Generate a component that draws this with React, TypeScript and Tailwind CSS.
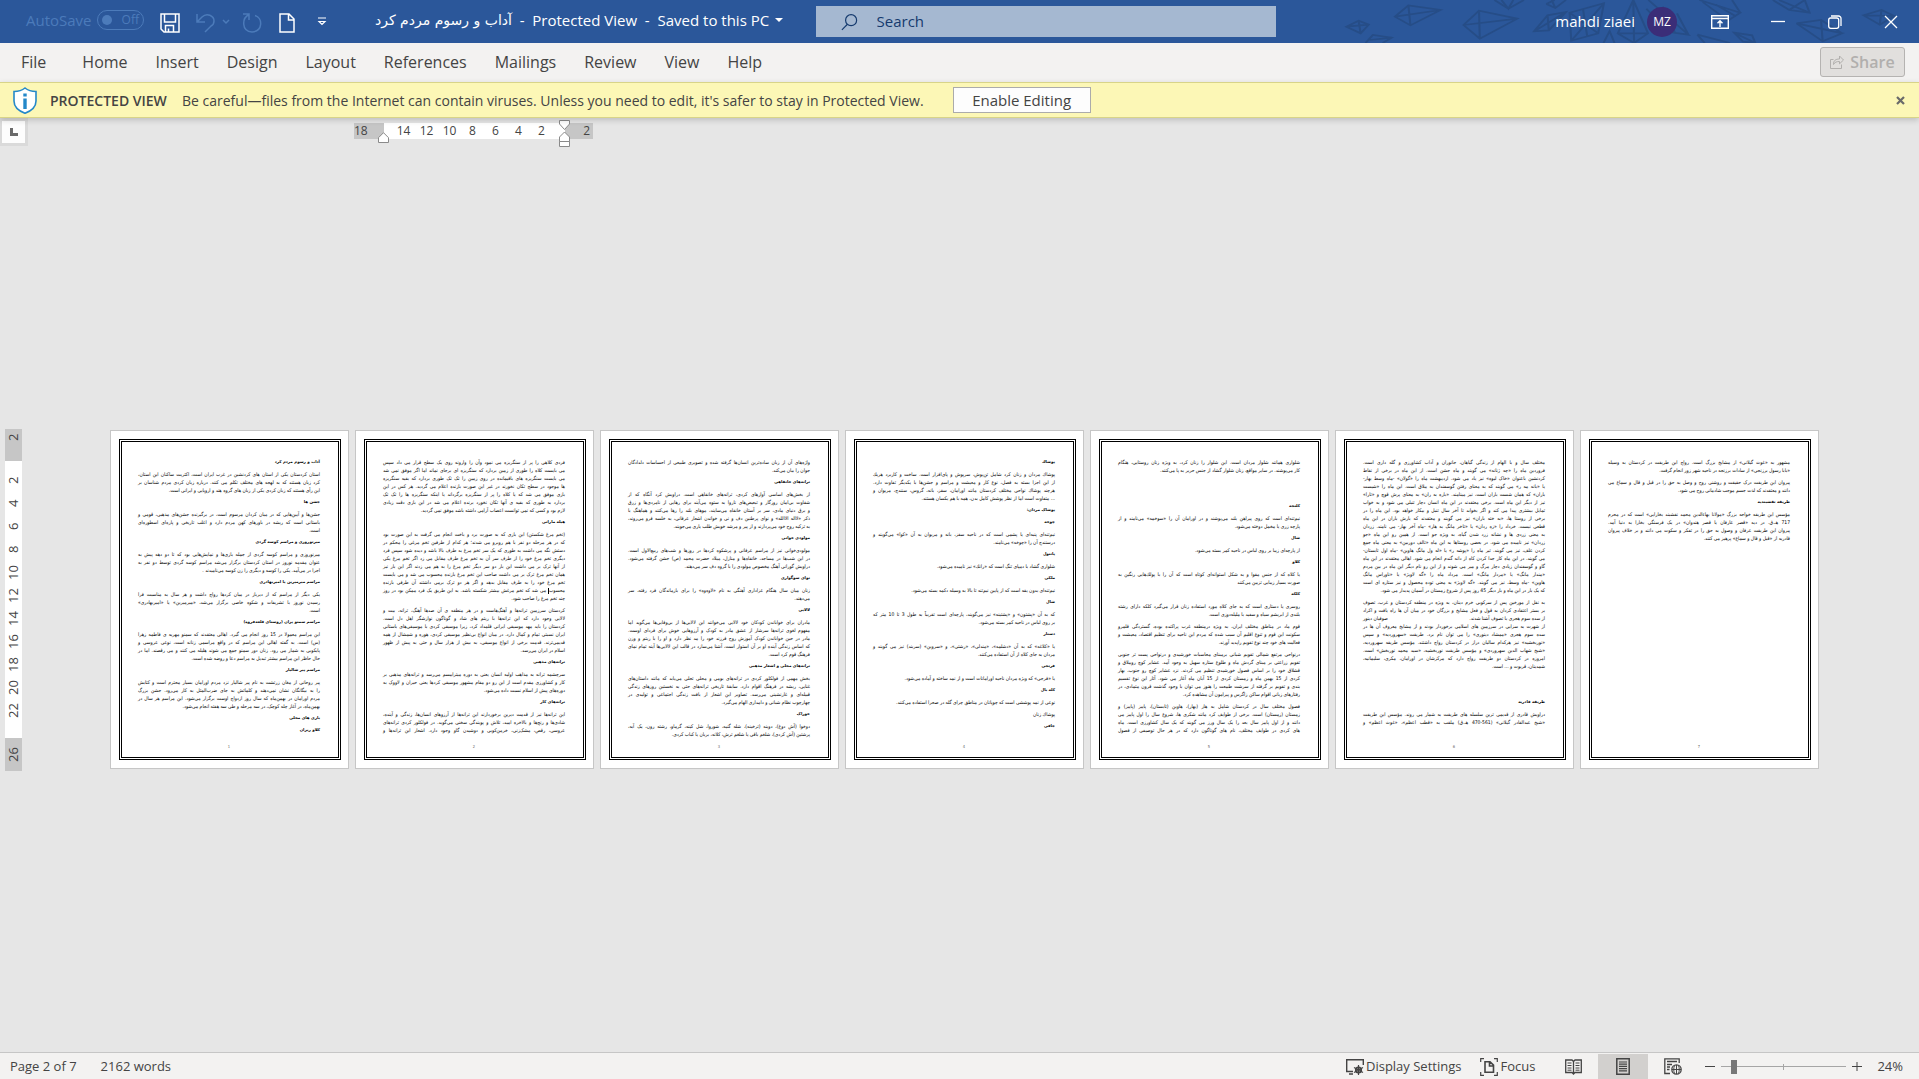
import type { ReactNode } from "react";

/* A string is a bold heading, an array is a paragraph split into its lines */
type Block = string | string[];

const tabs = [
  "File",
  "Home",
  "Insert",
  "Design",
  "Layout",
  "References",
  "Mailings",
  "Review",
  "View",
  "Help",
];

const pages: Block[][] = [
  [
    "آداب و رسوم مردم کرد",
    [
      "استان کردستان یکی از استان های کردنشین در غرب ایران است، اکثریت ساکنان این استان،",
      "کرد زبان هستند که به لهجه های مختلف تکلم می کنند. درباره زبان کردی مردم شناسان بر",
      "این رأی هستند که زبان کردی یکی از زبان های گروه هند و اروپایی و ایرانی است.",
    ],
    "جشن ها",
    [
      "جشن‌ها و آیین‌هایی که در میان کردان مرسوم است، در برگیرنده جشن‌های مذهبی، قومی و",
      "باستانی است که ریشه در باورهای کهن مردم دارد و اغلب تاریخی و پاره‌ای اسطوره‌ای",
      "است.",
    ],
    "میرنوروزی و مراسم کوسه گردی",
    [
      "میرنوروزی و مراسم کوسه گردی از جمله بازی‌ها و نمایش‌هایی بود که تا دو دهه پیش به",
      "عنوان مقدمه نوروز در استان کردستان برگزار می‌شد مراسم کوسه گردی توسط دو نفر به",
      "اجرا در می‌آمد. یکی را کوسه و دیگری را زن کوسه می‌نامیدند .",
    ],
    "مراسم میرمیرین یا امیربهادری",
    [
      "یکی دیگر از مراسم که از دیرباز در میان کردها رواج داشت و هر سال به مناسبت فرا",
      "رسیدن نوروز با تشریفات و شکوه خاصی برگزار می‌شد، «میرمیرین» یا «امیربهادری»",
      "است.",
    ],
    "مراسم سمنو پزان (روستای قلعه‌فروه)",
    [
      "این مراسم معمولا در 15 روز انجام می گیرد. اهالی معتقدند که سمنو مهریه ی فاطمه زهرا",
      "(س) است. به گفته اهالی این مراسم که در واقع مراسمی زنانه است، نوعی عروسی و",
      "پایکوبی به شمار می رود. زنان دور سمنو جمع می شوند هلیله می کنند و می رقصند. اما در",
      "حال حاظر این مراسم بیشتر تبدیل به مراسم دعا و روضه شده است.",
    ],
    "مراسم پیر شالیار",
    [
      "پیر روحانی از مغان زرتشت به نام پیر شالیار نزد مردم اورامان بسیار محترم است و کتابش",
      "را به بیگانگان نشان نمی‌دهند و کلماتش به جای ضرب‌المثل به کار می‌رود. جشن بزرگ",
      "مردم اورامان در بهمن‌ماه که سال روز ازدواج اوست برگزار می‌شود. این مراسم هر سال در",
      "بهمن‌ماه، در آغاز چله کوچک، در سه مرحله و طی سه هفته انجام می‌شود.",
    ],
    "بازی های محلی",
    "کلاو ریزان",
  ],
  [
    [
      "فردی کلاهی را پر از سنگریزه می نمود وآن را وارونه روی یک سطح قرار می داد سپس",
      "می بایست کلاه را طوری از زمین بردارد که سنگریزه ای برجای نماند اما اگر موفق نمی شد",
      "می بایست سنگریزه های باقیمانده در روی زمین را تک تک طوری بردارد که بقیه سنگریزه",
      "ها موجود در سطح تکان نخورند در غیر این صورت بازنده اعلام می گردید. هر کس در این",
      "بازی موفق می شد که یا کلاه را پر از سنگریزه برگرداند یا اینکه سنگریزه ها را تک تک",
      "بردارد به طوری که بقیه ی آنها تکان نخورد برنده اعلام می شد در این بازی دقت زیادی",
      "لازم بود و کسی که نمی توانست اعصاب آرامی داشته باشد موفق نمی گردید.",
    ],
    "هیله مارانی",
    [
      "(تخم مرغ شکستن) این بازی که به صورت برد و باخت انجام می گرفت به این صورت بود",
      "که در هر مرحله دو نفر با هم روبرو می شدند؛ هر کدام از طرفین تخم مرغی را محکم در",
      "دستش نگه می داشت به طوری که یک سر تخم مرغ به طرف بالا باشد و دیده شود سپس فرد",
      "دیگری تخم مرغ خود را از طرف سر آن به تخم مرغ طرف مقابل می زد اگر تخم مرغ یکی",
      "از آنها ترک بر می داشت این بار دو سر دیگر تخم مرغ را به هم می زدند اگر این بار نیز",
      "همان تخم مرغ ترک بر می داشت صاحب این تخم مرغ بازنده محسوب می شد و می بایست",
      "تخم مرغ خود را به طرف مقابل بدهد و اگر هر دو ترک برمی داشتند آن طرفی بازنده",
      "محسوب| می شد که تخم مرغش بیشتر شکسته باشد. به این طریق یک فرد ممکن بود در روز",
      "چند تخم مرغ را صاحب شود.",
    ],
    [
      "کردستان سرزمین ترانه‌ها و آهنگ‌هاست و در هر منطقه ی آن صدها آهنگ، ترانه، بیت و",
      "لالایی وجود دارد که این ترانه‌ها با ریتم های شاد و گوناگون نوازشگر اهل دل است.",
      "کردستان را باید مهد موسیقی ایرانی قلمداد کرد، زیرا موسیقی کردی با موسیقی‌های باستانی",
      "ایران نسبتی تمام و کمال دارد. در میان انواع بی‌نظیر موسیقی کردی، هوره و شمشال از همه",
      "قدیمی‌ترند. قدمت برخی از انواع موسیقی، به بیش از هزار سال و حتی به پیش از ظهور",
      "اسلام در ایران می‌رسد.",
    ],
    "ترانه‌های مذهبی",
    [
      "سرچشمه ترانه به مذاهب اولیه انسان یعنی به دوره میتراییسم می‌رسد و ترانه‌های مذهبی بر",
      "کار و کشاورزی مقدم است از این رو دو مقام مشهور موسیقی کردها یعنی حیران و لاووک به",
      "دوره‌های پیش از اسلام نسبت داده می‌شود.",
    ],
    "ترانه‌های کار",
    [
      "این ترانه‌ها نیز از قدمت دیرین برخوردارند این ترانه‌ها از آرزوهای انسان‌ها، زندگی و آینده،",
      "شادی‌ها و رنج‌ها و بالاخره امید، تلاش و پویندگی سخنی می‌گوید. در فولکلور کردی ترانه‌های",
      "عروسی، رقص، مشک‌زنی، خرمن‌کوبی و دوشیدن گاو وجود دارد. اشعار این ترانه‌ها و ",
    ],
  ],
  [
    [
      "واژه‌های آن از زبان ساده‌ترین انسان‌ها گرفته شده و تصویری طبیعی از احساسات دلدادگان",
      "جوان را بیان می‌کند.",
    ],
    "ترانه‌های خانقاهی",
    [
      "از بخش‌های اساسی آوازهای کردی، ترانه‌های خانقاهی است. دراویش کرد آنگاه که از",
      "شقاوت بی‌امان روزگار و تبعیض‌های ناروا به ستوه می‌آیند برای رهایی از نامردی‌ها و زرق",
      "و برق دنیای مادی، سر بر آستان خانقاه می‌سایند، موهای بلند را رها می‌کنند و هماهنگ با",
      "ذکر «لااله الاالله» و نوای پرطنین دف و نی و خواندن اشعار عرفانی، به خلسه فرو می‌روند،",
      "به تزکیه روح خود می‌پردازند و از پیر و مرشد خویش طلب یاری می‌جویند.",
    ],
    "مولودی خوانی",
    [
      "مولودی‌خوانی نیز از مراسم عرفانی و پرشکوه کردها در روزها و شب‌های ربیع‌الاول است.",
      "در این شب‌ها در مساجد، خانقاه‌ها و منازل، میلاد حضرت محمد (ص) جشن گرفته می‌شود.",
      "دراویش گورانی آهنگ مخصوص مولودی را با گروه دف سر می‌دهند.",
    ],
    "نوای سوگواری",
    [
      "زنان میان سال هنگام عزاداری آهنگی به نام «لاوه‌وه» را برای بازماندگان فرد رفته، سر",
      "می‌دهند.",
    ],
    "لالایی",
    [
      "مادران برای خواباندن کودکان خود لالایی می‌خوانند این لالایی‌ها از بی‌وفایی‌ها می‌گوید اما",
      "مفهوم لغوی ترانه‌ها سرشار از عشق مادر به کودک و آرزوهایی خوش برای فردای اوست.",
      "مادر در حین خواباندن کودک آموزش روح فرزند خود را مد نظر دارد و او را با ریتم و وزن",
      "که اساس زندگی آینده او بر آن استوار است، آشنا می‌سازد در قالب این لالایی‌ها آینه تمام نمای",
      "فرهنگ قوم کرد است.",
    ],
    "ترانه‌های محلی و اشعار مذهبی",
    [
      "بخش مهمی از فولکلور کردی در ترانه‌های بومی و محلی تجلی می‌یابد که مانند داستان‌های",
      "غنایی، ریشه در فرهنگ اقوام دارد. سابقۀ تاریخی ترانه‌های حتی به نخستین روزهای زندگی",
      "قبیله‌ای و غارنشینی می‌رسد. تصاویر این اشعار از بافت زندگی اجتماعی و تولیدی در",
      "چهارچوب نظام شبانی و دامداری الهام می‌گیرد.",
    ],
    "خوراک",
    [
      "دوخوا (آش دوغ)، دوینه (ترخینه)، شله گنیه، شوروا، شل کینه، گرماو، رشته رون، یک آبه،",
      "پرشتین (آش کردی)، شلغم باقی یا شلغم ترش، کلانه، بریان یا کباب کردی.",
    ],
  ],
  [
    "پوشاك",
    [
      " پوشاك مردان و زنان کرد شامل تن‌پوش، سرپوش و پای‌افزار است. ساخت و کاربرد هریك",
      "از این اجزا بسته به فصل، نوع کار و معیشت و مراسم و جشن‌ها با یکدیگر تفاوت دارد.",
      "هرچند پوشاك نواحی مختلف کردستان مانند اورامان، سقز، بانه، گروس، سنندج، مریوان و",
      "... متفاوت است اما از نظر پوشش کامل بدن، همه با هم یکسان هستند.",
    ],
    "پوشاک مردان:",
    "چوخه",
    [
      "نیم‌تنه‌ای پنبه‌ای یا پشمی است که در ناحیه سقز، بانه و مریوان به آن «کوا» می‌گویند و",
      "درسنندج آن را «چوخه» می‌نامند.",
    ],
    "پانتول",
    ["شلواری گشاد با دمپای تنگ است که «رانك» نیز نامیده می‌شود."],
    "ملکی",
    ["نیم‌تنه‌ای بدون یقه است که از پایین نیم‌تنه تا بالا به وسیله دکمه بسته می‌شود."],
    "شال",
    [
      "که به آن «پشتون» و «پشتینه» نیز می‌گویند، پارچه‌ای است تقریباً به طول 3 تا 10 متر که",
      "بر روی لباس در ناحیه کمر بسته می‌شود.",
    ],
    "دستار",
    [
      "یا «کلاغه» که به آن «دشلمه»، «مندلی»، «رشتی»، و «سروین» (سربند) نیز می گویند و",
      "مردان به جای کلاه از آن استفاده می‌کنند.",
    ],
    "فرنجی",
    ["یا «فرجی» که ویژه مردان ناحیه اورامانات است و از نمد ساخته و آماده می‌شود."],
    "کله بال",
    ["نوعی از نمد پوششی است که چوپانان در مناطق چرای گله در صحرا استفاده می‌کنند."],
    ["پوشاك زنان"],
    "جافی",
  ],
  [
    [
      "شلواری همانند شلوار مردان است. این شلوار را زنان کرد، به ویژه زنان روستایی، هنگام",
      "کار می‌پوشند. در سایر مواقع، زنان شلوار گشاد از جنس حریر به پا می‌کنند.",
    ],
    "",
    "",
    "کلنجه",
    [
      "نیم‌تنه‌ای است که روی پیراهن بلند می‌پوشند و در اورامان آن را «سوخمه» می‌نامند و از",
      "پارچه زری یا مخمل دوخته می‌شود.",
    ],
    "شال",
    ["از پارچه‌ای زیبا بر روی لباس در ناحیه کمر بسته می‌شود."],
    "کلاو",
    [
      "یا کلاه که از جنس مقوا و به شکل استوانه‌ای کوتاه است که آن را با پولك‌هایی رنگین به",
      "صورت بسیار زیبایی تزیین می‌کنند",
    ],
    "کلکه",
    [
      "روسری یا دستاری است که به جای کلاه مورد استفاده زنان قرار می‌گیرد کلکه دارای رشته",
      "بلندی از ابریشم سیاه و سفید با ملیله‌دوزی است.",
    ],
    [
      "قوم ماد در مناطق مختلف ایران، به ویژه درمنطقه غرب پراکنده بوده، گستردگی قلمرو",
      "سکونت این قوم و تنوع اقلیم آن سبب شده که مردم این ناحیه برای تنظیم اقتصاد، معیشت و",
      "فعالیت های خود چند نوع تقویم راپدید آورند.",
    ],
    [
      "درنواحی مرتفع شمالی تقویم شبانی برمبنای محاسبات خورشیدی و درنواحی پست تر جنوبی",
      "تقویم زراعتی بر مبنای گردش ماه و طلوع ستاره سهیل به وجود آمد. عشایر کوچ روییلاق و",
      "قشلاق خود را بر اساس فصول خورشیدی تنظیم می کردند. نزد عشایر کوچ رو جنوب، بهار",
      "کردی از 15 بهمن ماه و زمستان کردی از 15 آبان ماه آغاز می شود. آثار این نوع تقسیم",
      "بندی و تقویم بر گرفته از سرشت طبیعت را هنوز می توان با وجود گذشت قرون متمادی، در",
      "رفتارهای زبانی اقوام ساکن زاگرس و پیرامون آن مشاهده کرد.",
    ],
    [
      "فصول مختلف سال در کردستان شامل به هار (بهار)، هاوین (تابستان)، پاییز (پاییز) و",
      "زمستان (زمستان) است. برخی از طوایف کرد مانند شکری ها، شروع سال را اول پاییز می",
      "دانند و از اول پاییز سال بعد را یک سال ورز می گویند که یک سال کشاورزی است. ماه",
      "های کردی در طوایف مختلف، نام های گوناگون دارد که در هر حال توصیفی از فصول ",
    ],
  ],
  [
    [
      "مختلف سال و با الهام از زندگی گیاهان، جانوران و آداب کشاورزی و گله داری است.",
      "فروردین ماه را «چه ژنانه» می گویند و ماه جشن است. از این ماه در برخی از نقاط",
      "کردنشین باعنوان «خاک لیوه» نیز یاد می شود. اردیبهشت ماه را «گولان» -ماه وسط بهار-",
      "یا «بانه مه ر» می گویند که به معنای رفتن گوسفندان به ییلاق است. این ماه را «شیست",
      "باران» که همان شست باران است، نیز مینامند. «باره به ران» به معنای پرش قوچ و «تارا»",
      "نیز از دیگر این ماه است. برخی معتقدند در این ماه انسان دچار تنبلی می شود و به خواب",
      "تمایل بیشتری پیدا می کند و اگر بخوابد تا آخر سال تنبل و بیکار خواهد بود. این ماه را در",
      "برخی از روستا ها، «به خته باران» نیز می گویند و معتقدند که بارش باران در این ماه",
      "قطعی نیست. خرداد را «زه ردان» یا «تاخر مانگ به هار» -ماه آخر بهار- می نامند. زردان",
      "به معنی زردی ها و نشانه زرد شدن گیاه، به ویژه جو است. از همین رو این ماه «جو",
      "زردان» نیز نامیده می شود. در بعضی روستاها به این ماه «تالف دوربین» به معنی ماه جمع",
      "کردن علف، نیز می گویند. تیر ماه را «پوشه ر» یا «له ول مانگ هاوین» -ماه اول تابستان-",
      "می گویند. در این ماه کار جدا کردن کاه از دانه گندم انجام می شود. اهالی معتقدند در این ماه",
      "گاو و گوسفندان زیادی دچار مرگ و میر می شوند و از این رو نام دیگر این ماه در بین مردم",
      "«مندار مانگ» یا «مردار مانگ» است. مرداد ماه را «گه لاویژ» یا «ناوراس مانگ",
      "هاوین» -ماه وسط، نیز می گویند. «گه لاویژ» به معنی توده محصول و نیز ستاره ای است",
      "که یک بار در این ماه و بار دیگر 45 روز پس از شروع زمستان در آسمان پدیدار می شود.",
    ],
    [
      "به نقل از مورخین پس از سرکوبی خرم دینان، به ویژه در منطقه کردستان و غرب، تصوف",
      "بر بستر اعتقادی کردان به قول و فعل مشایخ و بزرگان خود در میان آن ها راه یافت و اکراد",
      "از سده سوم هجری با تصوف آشنا شدند.\tصوفیان دینور",
      "از شهرت به سزایی در سرزمین های اسلامی برخوردار بودند و از مشایخ معروف آن ها در",
      "سده سوم هجری «ممشاد دینوری» را می توان نام برد. طریقت «سهروردیه» و سپس",
      "«نوربخشیه» نیز هرکدام سالیان دراز در کردستان رواج داشتند. مؤسس طریقه سهروردیه،",
      "«شیخ شهاب الدین سهروردی» و مؤسس طریقت نوربخشیه، «سید محمد نوربخش» است.",
      "امروزه در کردستان دو طریقت رواج دارد که مرکزشان در اورامان، مکری، سلیمانیه،",
      "شمدینان، قریوت و ... است.",
    ],
    "",
    "",
    "طریقه قادریه",
    [
      "دراویش قادری از قدیمی ترین سلسله های طریقت به شمار می روند. مؤسس این طریقت",
      "«شیخ عبدالقادر گیلانی» (561-470 هـ.ق) ملقب به «قطب اعظم»، «غوث اعظم» و ",
    ],
  ],
  [
    [
      "مشهور به «غوث گیلانی» از مشایخ بزرگ است. رواج این طریقت در کردستان به وسیله",
      "«بابا رسول برزنجی» از سادات برزنجه در ناحیه شهر زور انجام گرفت.",
    ],
    [
      "پیروان این طریقت درک حقیقت و روشنی روح و وصل به حق را در قیل و قال و سماع می",
      "دانند و معتقدند که لذت جسم موجب شادمانی روح می شود.",
    ],
    "طریقه نقشبندیه",
    [
      "مؤسس این طریقه خواجه بزرگ «مولانا بهاءالدین محمد نقشبند بخارایی» است که در محرم",
      "717 هـ.ق. در دیه «قصر عارفان یا قصر هندوان» در یک فرسنگی بخارا به دنیا آمد.",
      "پیروان این طریقت عرفان و وصول به حق را در تفکر و سکوت می دانند و بر خلاف پیروان",
      "قادریه از «قیل و قال و سماع» پرهیز می کنند.",
    ],
  ],
];

function Icon({ className, box, children }: { className: string; box: string; children: ReactNode }) {
  return (
    <svg className={className} viewBox={box} fill="none" stroke="currentColor" aria-hidden="true">
      {children}
    </svg>
  );
}

/* Kite pattern printed on the right end of the title bar */
function Kites() {
  return (
    <svg
      className="absolute right-0 top-0 h-full w-[640px]"
      viewBox="0 0 1568 129"
      preserveAspectRatio="none"
      fill="none"
      stroke="#264d87"
      strokeWidth="5"
      aria-hidden="true"
    >
      <path d="M165 80l30-18 25 12-20 26zM165 80l55-6M195 62l5 38" />
      <path d="M284 50l33-34 79 14-74 46zM284 50l112-20M317 16l5 60" />
      <path d="M452 75l38-43 94 24-92 60zM452 75l132-19M490 32l2 84" />
      <path d="M212 129l18-24 46 8-22 16M222 120l54-7" />
      <path d="M528 0l34 26 38-26M545 0l17 26 12-26" />
      <path d="M655 12l22 12 26-24M668 0l9 24M655 12l20-12" />
      <path d="M625 94l33-48 45-10-42 55zM625 94l78-58M658 46l3 45" />
      <path d="M712 38l84-28-14 90-66 22zM712 38l70 62M796 10l-80 112M745 28l10 80" />
      <path d="M868 0l-38 100 40 29 34-29zM868 0l2 129M830 100l74 0M795 129l15-36 12 36" />
      <path d="M905 0l98 104-48-8-55-70M940 20l30 78M975 40l28 64" />
      <path d="M1030 0l100 38-30 24-62-56M1070 14l48 34M1130 38l-20-38" />
      <path d="M1025 104l80 25M1025 104l18 25M1115 98l44 8 8 23-30-4zM1115 98l52 31" />
      <path d="M1210 0l40 30 50 8-12-38M1250 30l38-30M1225 0l75 38" />
      <path d="M1268 70l112 30-48 24zM1268 70l60-10 52 40M1328 60l4 64" />
      <path d="M1432 46l44-16 32 18-36 26zM1432 46l76 2M1476 30l-4 44" />
    </svg>
  );
}

function TitleBar() {
  return (
    <header className="relative flex h-[43px] shrink-0 items-center bg-[#2b579a] text-white">
      <Kites />
      <div className="relative flex w-[375px] shrink-0 items-center pl-[26px] text-[#4c7bba]">
        <label htmlFor="autosave" className="w-[71px] pb-[3px] text-[15px] leading-5">
          AutoSave
        </label>
        <button
          id="autosave"
          role="switch"
          aria-checked="false"
          className="mb-[3px] flex h-5 w-[47px] items-center justify-between rounded-full border border-current px-1 text-[12px]"
        >
          <span className="size-[10px] rounded-full bg-current" />
          Off
        </button>
        <button aria-label="Save" className="ml-4 mt-[3px] text-white">
          <Icon className="size-5" box="0 0 20 20">
            <path d="M1 1h18v18H4l-3-3zM4.500 1v8h11V1M5.500 19v-6.500h8V19M8.500 19v-3.500" strokeWidth="1.500" />
          </Icon>
        </button>
        <button aria-label="Undo" className="ml-4 mt-[3px]">
          <Icon className="size-5" box="0 0 20 20">
            <path d="M1 1v8h8M1 9l5-5c5-5 12-1 12 4 0 2-1 4-3 5l-6 6" strokeWidth="1.500" />
          </Icon>
        </button>
        <button aria-label="Undo history" className="ml-[6px]">
          <Icon className="h-2 w-2" box="0 0 8 8">
            <path d="M1 2l3 3 3-3" strokeWidth="1.500" />
          </Icon>
        </button>
        <button aria-label="Redo" className="ml-3 mt-[3px]">
          <Icon className="size-5" box="0 0 20 20">
            <path d="M1 1h6v6M7 1.500C0 5-1 18 10 19c11-1 11-14 3-16.500" strokeWidth="1.500" />
          </Icon>
        </button>
        <button aria-label="New" className="ml-[17px] mt-[3px] text-white">
          <Icon className="h-5 w-4" box="0 0 16 20">
            <path d="M1 1h9l5 5v13H1zM9.500 1v6H15" strokeWidth="1.500" />
          </Icon>
        </button>
        <button aria-label="Customize Quick Access Toolbar" className="ml-[22px] text-white">
          <Icon className="h-[9px] w-[10px]" box="0 0 10 9">
            <path d="M1 1h8M2 4.500l3 3 3-3z" strokeWidth="1.200" />
          </Icon>
        </button>
      </div>

      <button className="relative mb-[3px] flex items-center whitespace-pre text-[15px] leading-5">
        <span className="font-['DejaVu_Sans',sans-serif] text-[14px]" dir="rtl" lang="fa">
          آداب و رسوم مردم کرد
        </span>
        <span>{"  -  Protected View  -  Saved to this PC"}</span>
        <span className="ml-[6px] border-x-4 border-t-4 border-x-transparent border-t-white" />
      </button>

      <label className="absolute left-[816px] top-[6px] flex h-[31px] w-[460px] items-center bg-[#a5b8d1] pl-[25px] text-[#153a6e]">
        <Icon className="size-[18px]" box="0 0 18 18">
          <circle cx="11" cy="7" r="6" strokeWidth="1.300" />
          <path d="M7 11.500L1 17.500" strokeWidth="1.300" />
        </Icon>
        <input
          type="search"
          aria-label="Search"
          placeholder="Search"
          className="ml-[19px] w-full bg-transparent text-[15px] outline-none placeholder:text-[#153a6e]"
        />
      </label>

      <div className="relative ml-auto flex items-center">
        <button className="flex items-center gap-3 text-[15px]">
          mahdi ziaei
          <span className="flex size-[30px] items-center justify-center rounded-full bg-[#3b2d78] text-[12px]">MZ</span>
        </button>
        <button aria-label="Ribbon display options" className="ml-[34px]">
          <Icon className="h-[14px] w-[18px]" box="0 0 18 14">
            <path d="M.7.7h16.600v12.600H.7zM.7 3.500h16.600M9 12V6M6.500 8.300L9 5.800l2.500 2.500" strokeWidth="1.400" />
          </Icon>
        </button>
        <button aria-label="Minimize" className="ml-[42px]">
          <Icon className="h-[14px] w-[14px]" box="0 0 14 14">
            <path d="M0 6.500h14" strokeWidth="1.300" />
          </Icon>
        </button>
        <button aria-label="Restore" className="ml-[43px]">
          <Icon className="h-[14px] w-[14px]" box="0 0 14 14">
            <rect x=".7" y="3" width="10" height="10.300" rx="2" strokeWidth="1.300" />
            <path d="M3 1h7.500a2.500 2.500 0 0 1 2.500 2.500V11" strokeWidth="1.300" />
          </Icon>
        </button>
        <button aria-label="Close" className="ml-[42px] mr-[21px]">
          <Icon className="h-[14px] w-[14px]" box="0 0 14 14">
            <path d="M1 1l12 12M13 1L1 13" strokeWidth="1.300" />
          </Icon>
        </button>
      </div>
    </header>
  );
}

function RibbonTabs() {
  return (
    <nav className="flex h-[39px] shrink-0 items-center bg-[#f3f2f1] pb-px pl-[21px] pr-[14px] text-[16px] text-[#444444]">
      {tabs.map((tab) => (
        <button key={tab} className="mr-7 first:mr-9">
          {tab}
        </button>
      ))}
      <button
        disabled
        className="ml-auto flex h-[30px] w-[85px] items-center justify-center gap-[6px] rounded-[3px] border border-[#b5b3b1] bg-[#e1dfdd] font-semibold text-[#b1afad]"
      >
        <Icon className="size-[14px]" box="0 0 14 14">
          <path d="M3.500 4.500h-3v9h11v-4M3.500 9.500c0-4 2-5.500 6-5.500V1l4 4-4 3.800V6.500c-3 0-4.500.5-6 3z" />
        </Icon>
        Share
      </button>
    </nav>
  );
}

function ProtectedViewBar() {
  return (
    <div
      role="status"
      className="relative z-10 flex h-9 shrink-0 items-center border-y border-[#d8d488] bg-[#fcf7b6] pl-[13px] pr-[14px] text-[14px] text-[#444444] shadow-[0_2px_6px_rgba(0,0,0,0.18)]"
    >
      <Icon className="h-[27px] w-6" box="0 0 24 27">
        <path d="M12 1c3 2.500 7 3.500 11 3.500V14c0 6-5 10-11 12.300C6 24 1 20 1 14V4.500C5 4.500 9 3.500 12 1z" fill="#fff" stroke="#2488c9" strokeWidth="1.600" />
        <path d="M12 6.500v3M12 11.500V22" stroke="#2488c9" strokeWidth="3.400" />
      </Icon>
      <span className="ml-[13px] w-[132px] font-semibold">PROTECTED VIEW</span>
      <span>
        Be careful—files from the Internet can contain viruses. Unless you need to edit, it's safer to stay in Protected
        View.
      </span>
      <button className="ml-[29px] h-[26px] w-[138px] border border-[#ababab] bg-[#fdfdfd] text-[15px] leading-5">
        Enable Editing
      </button>
      <button aria-label="Close message bar" className="ml-auto text-[#6a6a6a]">
        <Icon className="size-[9px]" box="0 0 9 9">
          <path d="M1 1l7 7M8 1L1 8" strokeWidth="2.200" />
        </Icon>
      </button>
    </div>
  );
}

function HorizontalRuler() {
  return (
    <div className="flex h-[29px] shrink-0 items-start text-[12px] leading-4 text-[#444444]">
      <button
        aria-label="Tab selector"
        className="flex h-7 w-7 items-center justify-center border-[3px] border-l-2 border-[#dadada] bg-[#fdfdfd]"
      >
        <span className="size-2 border-b-[3px] border-l-[3px] border-[#6a6a6a]" />
      </button>
      <div className="relative ml-[326px] mt-[5px] flex h-4">
        <div className="w-[30px] bg-[#c6c6c6]">18</div>
        <div className="flex w-[181px] bg-white pl-2">
          {[14, 12, 10, 8, 6, 4, 2].map((n) => (
            <span key={n} className="w-[23px] text-center">
              {n}
            </span>
          ))}
        </div>
        <div className="w-7 bg-[#c6c6c6] pr-[3px] text-right">2</div>
        <svg
          className="absolute left-6 top-[9px] h-[11px] w-[11px]"
          viewBox="0 0 11 11"
          fill="#fff"
          stroke="#8a8a8a"
          aria-hidden="true"
        >
          <path d="M5.500.7l5 5v4.800H.5V5.700z" />
        </svg>
        <svg
          className="absolute left-[205px] top-[-3px] h-[27px] w-[11px]"
          viewBox="0 0 11 27"
          fill="#fff"
          stroke="#8a8a8a"
          aria-hidden="true"
        >
          <path d="M.5.5h10V4l-5 5.500L.5 4zM5.500 12l5 5v4.500H.5V17zM.5 21.500h10v5H.5z" />
        </svg>
      </div>
    </div>
  );
}

function VerticalRuler() {
  return (
    <div className="ml-[5px] flex w-[17px] shrink-0 rotate-180 flex-col-reverse text-[13px] leading-[17px] text-[#444444]">
      <div className="flex h-8 items-end justify-center bg-[#c6c6c6] pb-[5px]">
        <span className="[writing-mode:vertical-rl]">2</span>
      </div>
      <div className="flex h-[277px] flex-col-reverse bg-white pb-2">
        {[2, 4, 6, 8, 10, 12, 14, 16, 18, 20, 22].map((n) => (
          <span key={n} className="h-[23px] text-center [writing-mode:vertical-rl]">
            {n}
          </span>
        ))}
      </div>
      <div className="flex h-[33px] items-center justify-center bg-[#c6c6c6]">
        <span className="[writing-mode:vertical-rl]">26</span>
      </div>
    </div>
  );
}

function Line({ text, last }: { text: string; last: boolean }) {
  if (text.includes("\t")) {
    const [start, end] = text.split("\t");
    return (
      <div className="flex justify-between">
        <span>{start}</span>
        <span>{end}</span>
      </div>
    );
  }
  const [before, after] = text.split("|");
  // a trailing space marks a line that runs on to the next page
  const full = !last || text.endsWith(" ");
  return (
    <div className={full ? "[text-align-last:justify]" : ""}>
      {before}
      {after && <span className="inline-block h-[6px] w-px bg-black align-middle" />}
      {after}
    </div>
  );
}

function Page({ blocks, number }: { blocks: Block[]; number: number }) {
  return (
    <article className="h-[339px] w-[239px] shrink-0 border border-[#c6c6c6] bg-white p-2 pr-[7px]">
      <div
        dir="rtl"
        lang="fa"
        className="flex h-full flex-col border-[3px] border-double border-black pb-[6px] pl-4 pr-[18px] pt-4 font-['DejaVu_Sans_Condensed','DejaVu_Sans',sans-serif] text-[5px] leading-[8px] text-black"
      >
        <div className="flex flex-1 flex-col gap-1 whitespace-nowrap">
          {blocks.map((block, i) =>
            typeof block === "string" ? (
              <h2 key={i} className="h-2 font-['DejaVu_Sans',sans-serif] text-[4px] font-bold">
                {block}
              </h2>
            ) : (
              <div key={i}>
                {block.map((text, j) => (
                  <Line key={j} text={text} last={j === block.length - 1} />
                ))}
              </div>
            ),
          )}
        </div>
        <div className="text-center text-[4px] text-[#666666]">{number}</div>
      </div>
    </article>
  );
}

function StatusBar() {
  return (
    <footer className="flex h-[27px] shrink-0 items-center border-t border-[#c6c6c6] bg-[#f3f2f1] pl-[10px] pr-4 pt-px text-[13px] text-[#444444]">
      <button>Page 2 of 7</button>
      <button className="ml-6">2162 words</button>
      <button className="ml-auto flex items-center gap-[2px]">
        <Icon className="h-4 w-[18px]" box="0 0 18 16">
          <path d="M7 12.500H.7V.7h16.600V6M3 15h4" strokeWidth="1.400" />
          <circle cx="12.500" cy="11" r="2.700" strokeWidth="1.800" />
          <path d="M12.500 6v10M8 8.500l9 5M17 8.500l-9 5" strokeWidth="1.200" />
        </Icon>
        Display Settings
      </button>
      <button className="ml-[19px] flex items-center gap-[2px]">
        <Icon className="h-[18px] w-[18px]" box="0 0 18 18">
          <path d="M4 .7H.7V4M14 .7h3.300V4M4 17.300H.7V14M14 17.300h3.300V14" strokeWidth="1.200" />
          <path d="M5 3.700h5l3.500 3.500v7H5zM9.500 4v4h4" strokeWidth="1.600" />
        </Icon>
        Focus
      </button>
      <button aria-label="Read Mode" className="ml-[13px] flex h-[26px] w-[50px] items-center justify-center">
        <Icon className="h-[16px] w-[17px]" box="0 0 17 16">
          <path d="M8.500 2.500L7 1H.7v12.500H7L8.500 15l1.500-1.500h6.300V1H10zM8.500 2.500V15" strokeWidth="1.300" />
          <path d="M2.500 4h4M2.500 6.500h4M2.500 9h4M2.500 11.200h4M10.500 4h4M10.500 6.500h4M10.500 9h4M10.500 11.200h4" />
        </Icon>
      </button>
      <button
        aria-label="Print Layout"
        aria-pressed="true"
        className="flex h-[26px] w-[50px] items-center justify-center bg-[#d2d0ce]"
      >
        <Icon className="h-[17px] w-[14px]" box="0 0 14 17">
          <path d="M.8.8h12.400v15.400H.8z" strokeWidth="1.500" />
          <path d="M3 4h8M3 6.200h8M3 8.400h8M3 10.600h8M3 12.800h8" strokeWidth="1.200" />
        </Icon>
      </button>
      <button aria-label="Web Layout" className="flex h-[26px] w-[50px] items-center justify-center">
        <Icon className="h-[17px] w-[18px]" box="0 0 18 17">
          <path d="M6 15.500H.8V.8h14.400V5M3 3.500h10M3 6.500h5M3 9h3M3 11.500h2.500" strokeWidth="1.300" />
          <circle cx="12.500" cy="11.500" r="4.700" strokeWidth="1.300" />
          <path d="M8 11.500h9M12.500 7v9M10.500 7.500c-1 2.500-1 5.500 0 8M14.500 7.500c1 2.500 1 5.500 0 8" />
        </Icon>
      </button>
      <button aria-label="Zoom out" className="ml-[7px]">
        <Icon className="size-[10px]" box="0 0 10 10">
          <path d="M0 4.500h10" />
        </Icon>
      </button>
      <div className="relative ml-[6px] flex h-4 w-[125px] items-center">
        <span className="absolute left-[62px] h-[6px] w-px bg-[#a6a6a6]" />
        <input
          type="range"
          aria-label="Zoom"
          min={10}
          max={190}
          defaultValue={24}
          className="relative h-px w-full appearance-none bg-[#a6a6a6] [&::-webkit-slider-thumb]:h-[14px] [&::-webkit-slider-thumb]:w-[6px] [&::-webkit-slider-thumb]:appearance-none [&::-webkit-slider-thumb]:bg-[#777777]"
        />
      </div>
      <button aria-label="Zoom in" className="ml-[6px]">
        <Icon className="size-[10px]" box="0 0 10 10">
          <path d="M0 4.500h10M5 0v9" />
        </Icon>
      </button>
      <button className="ml-[15px]">24%</button>
    </footer>
  );
}

export default function App() {
  return (
    <div className="flex h-screen flex-col overflow-hidden bg-[#e6e6e6] font-['Open_Sans',sans-serif]">
      <TitleBar />
      <RibbonTabs />
      <ProtectedViewBar />
      <HorizontalRuler />
      <main className="flex flex-1 items-center">
        <VerticalRuler />
        <div className="flex flex-1 justify-center gap-[6px] pr-3">
          {pages.map((blocks, i) => (
            <Page key={i} blocks={blocks} number={i + 1} />
          ))}
        </div>
      </main>
      <StatusBar />
    </div>
  );
}
